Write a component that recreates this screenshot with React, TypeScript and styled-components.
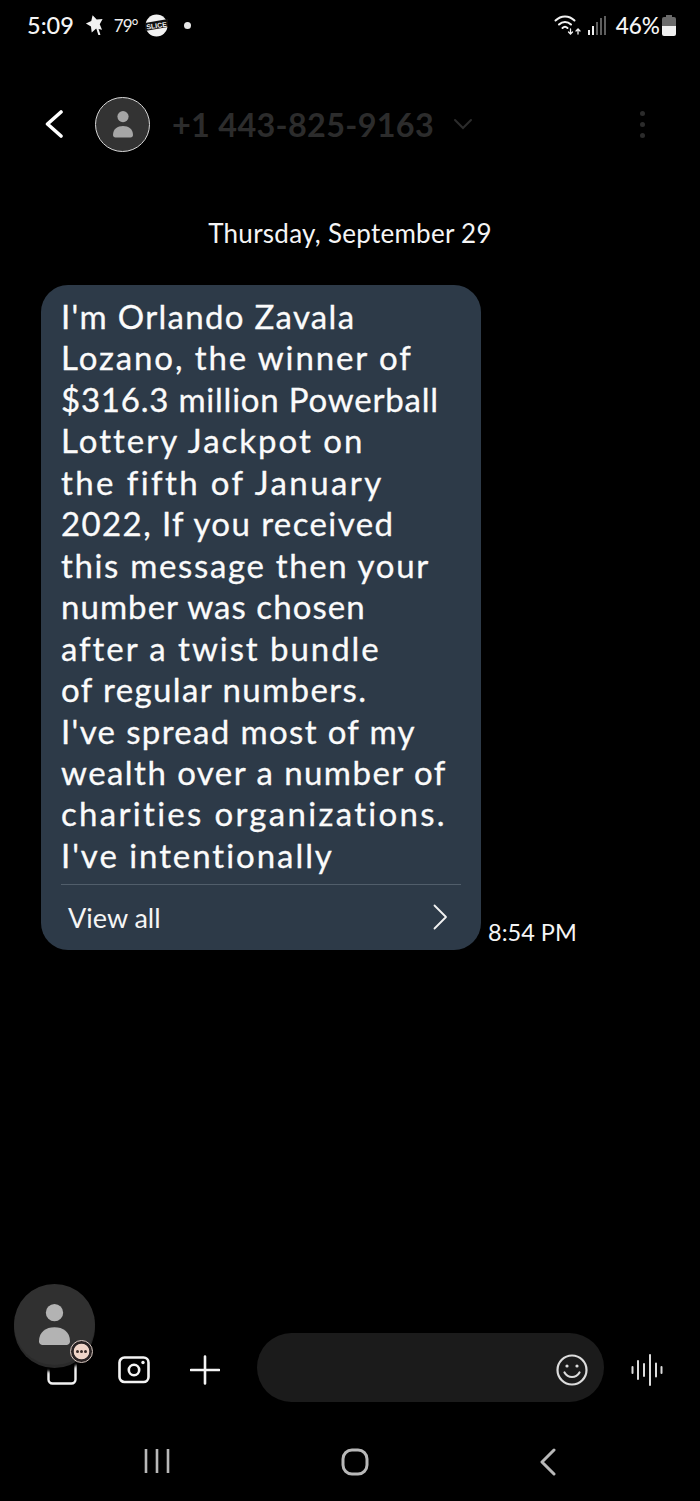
import React from "react";
import styled, { createGlobalStyle } from "styled-components";

const lines = [
  { text: "I'm Orlando Zavala", tracking: 1.3 },
  { text: "Lozano, the winner of", tracking: 1.9 },
  { text: "$316.3 million Powerball", tracking: 0.78 },
  { text: "Lottery Jackpot on", tracking: 2 },
  { text: "the fifth of January", tracking: 2.4 },
  { text: "2022, If you received", tracking: 1.4 },
  { text: "this message then your", tracking: 1.65 },
  { text: "number was chosen", tracking: 1.05 },
  { text: "after a twist bundle", tracking: 1.95 },
  { text: "of regular numbers.", tracking: 1.4 },
  { text: "I've spread most of my", tracking: 1.35 },
  { text: "wealth over a number of", tracking: 1.45 },
  { text: "charities organizations.", tracking: 2.3 },
  { text: "I've intentionally", tracking: 1.95 },
];

const PersonIcon: React.FC<{ width: number; color: string }> = ({ width, color }) => (
  <svg width={width} height={width * 1.35} viewBox="0 0 20 27" fill={color}>
    <circle cx="10" cy="5.600" r="5.600" />
    <path d="M0 24C0 18 4.500 15 10 15s10 3 10 9c0 1.500-1 2.500-2.500 2.500h-15C1 26.500 0 25.500 0 24z" />
  </svg>
);

const App: React.FC = () => {
  return (
    <>
      <GlobalStyle />
      <Screen>
        <StatusBar>
          <StatusGroup>
            <ClockText>5:09</ClockText>
            <svg width="19" height="20" viewBox="0 0 18 21" fill="#f2f2f2">
              <path d="M7 .3l4.300 4.500 6.200-.5-3 5.500 2.400 5.700-6.100-1.200-4.700 4.100-.8-6.200L0 9l5.600-2.600z" />
              <path d="M11 11l3 9.500" stroke="#f2f2f2" strokeWidth="2.200" strokeLinecap="round" />
            </svg>
            <TempText>79°</TempText>
            <svg width="23" height="23" viewBox="0 0 23 23">
              <circle cx="11.500" cy="11.500" r="11" fill="#f2f2f2" />
              <path d="M0 9l23-4v8L0 17z" fill="#111" />
              <SliceLabel x="11.500" y="14" textAnchor="middle" transform="rotate(-8 11.500 11.500)">
                SLICE
              </SliceLabel>
            </svg>
            <NoticeDot />
          </StatusGroup>
          <StatusGroup>
            <svg width="27" height="22" viewBox="0 0 27 22" fill="none" stroke="#f2f2f2" strokeLinecap="round">
              <path d="M1.500 6.500C7 1 15 1 20.500 6.500" strokeWidth="2" />
              <path d="M5 10.500c3.500-3.500 8.500-3.500 12 0" strokeWidth="2" />
              <path d="M8.500 14c1.500-1.500 3.500-1.500 5 0" strokeWidth="2" />
              <path d="M16.500 15v5M14.500 18l2 2 2-2M24 20v-5M22 17l2-2 2 2" strokeWidth="1.300" />
            </svg>
            <SignalBars>
              <Bar $height={5} $on />
              <Bar $height={9} $on />
              <Bar $height={13} />
              <Bar $height={17} />
              <Bar $height={19} />
            </SignalBars>
            <BatteryText>46%</BatteryText>
            <Battery>
              <BatteryCap />
              <BatteryBody />
            </Battery>
          </StatusGroup>
        </StatusBar>

        <Header>
          <svg width="18" height="28" viewBox="0 0 18 28" fill="none" stroke="#fff" strokeWidth="3.600" strokeLinecap="round" strokeLinejoin="round">
            <path d="M16 2L2.500 14 16 26" />
          </svg>
          <HeaderAvatar>
            <PersonIcon width={20} color="#a6a6a6" />
          </HeaderAvatar>
          <PhoneNumber>+1 443-825-9163</PhoneNumber>
          <svg width="20" height="12" viewBox="0 0 20 12" fill="none" stroke="#2c2c2c" strokeWidth="2" strokeLinecap="round">
            <path d="M2 2l8 8 8-8" />
          </svg>
          <MenuDots>
            <MenuDot />
            <MenuDot />
            <MenuDot />
          </MenuDots>
        </Header>

        <DateLabel>Thursday, September 29</DateLabel>

        <MessageRow>
          <Bubble>
            <BubbleText>
              {lines.map((line) => (
                <BubbleLine key={line.text} $tracking={line.tracking}>
                  {line.text}
                </BubbleLine>
              ))}
            </BubbleText>
            <Divider />
            <ViewAll>
              <ViewAllLabel>View all</ViewAllLabel>
              <svg width="16" height="26" viewBox="0 0 16 26" fill="none" stroke="#f2f2f2" strokeWidth="1.800" strokeLinecap="round" strokeLinejoin="round">
                <path d="M2.500 1.500L14 13 2.500 24.500" />
              </svg>
            </ViewAll>
          </Bubble>
          <TimeStamp>8:54 PM</TimeStamp>
        </MessageRow>

        <Spacer />

        <Composer>
          <ToolSlot $left={0}>
            <svg width="30" height="30" viewBox="0 0 30 30" fill="none" stroke="#f2f2f2" strokeWidth="2.400">
              <rect x="1.500" y="6" width="27" height="22.500" rx="4" />
            </svg>
          </ToolSlot>
          <ToolSlot $left={41}>
            <svg width="32" height="28" viewBox="0 0 32 28" fill="none" stroke="#f4f4f4" strokeWidth="2.600">
              <rect x="1.500" y="1.500" width="29" height="24.500" rx="5" />
              <circle cx="16" cy="14" r="5.200" />
              <circle cx="25" cy="6.500" r="1.700" fill="#f4f4f4" stroke="none" />
            </svg>
          </ToolSlot>
          <ToolSlot $left={40}>
            <svg width="30" height="30" viewBox="0 0 30 30" fill="none" stroke="#f4f4f4" strokeWidth="2.600" strokeLinecap="round">
              <path d="M15 1.500v27M1 15h28" />
            </svg>
          </ToolSlot>
          <InputPill>
            <svg width="32" height="32" viewBox="0 0 32 32" fill="none" stroke="#dcdcdc" strokeWidth="2.200" strokeLinecap="round">
              <circle cx="16" cy="16" r="14.500" />
              <path d="M8.500 18.500c3.500 6 11.500 6 15 0" />
              <circle cx="11" cy="12" r="1.600" fill="#dcdcdc" stroke="none" />
              <circle cx="21" cy="12" r="1.600" fill="#dcdcdc" stroke="none" />
            </svg>
          </InputPill>
          <ToolSlot $left={27}>
            <svg width="32" height="32" viewBox="0 0 32 32" fill="none" stroke="#dcdcdc" strokeWidth="2" strokeLinecap="round">
              <path d="M1.500 13v6M7 7v18M13 10v12M19 1v30M25 9.500v13M30.500 13v6" />
            </svg>
          </ToolSlot>
        </Composer>

        <NavBar>
          <svg width="26" height="26" viewBox="0 0 26 26" fill="none" stroke="#b8b8b8" strokeWidth="2.600">
            <path d="M2 1v24M13 1v24M24 1v24" />
          </svg>
          <svg width="28" height="28" viewBox="0 0 28 28" fill="none" stroke="#b8b8b8" strokeWidth="3">
            <rect x="2" y="2" width="24" height="24" rx="9" />
          </svg>
          <svg width="18" height="28" viewBox="0 0 18 28" fill="none" stroke="#b8b8b8" strokeWidth="3" strokeLinecap="round" strokeLinejoin="round">
            <path d="M15 2L3 14l12 12" />
          </svg>
        </NavBar>

        <FloatingChat>
          <FloatingShadow />
          <FloatingHead>
            <PersonIcon width={31} color="#b3b3b3" />
          </FloatingHead>
          <ChatBadge>
            <BadgeDot />
            <BadgeDot />
            <BadgeDot />
          </ChatBadge>
        </FloatingChat>
      </Screen>
    </>
  );
};

export default App;

const GlobalStyle = createGlobalStyle`
  html, body {
    margin: 0;
    padding: 0;
    background: #000;
  }
`;

const Screen = styled.div`
  position: relative;
  display: flex;
  flex-direction: column;
  width: 700px;
  height: 1501px;
  overflow: hidden;
  background: #000;
  color: #fff;
  font-family: "Lato", "Noto Sans", sans-serif;
  font-variant-ligatures: none;
`;

const StatusBar = styled.div`
  display: flex;
  align-items: center;
  justify-content: space-between;
  height: 50px;
  padding: 0 24px 0 27px;
`;

const StatusGroup = styled.div`
  display: flex;
  align-items: center;
  gap: 7px;
`;

const ClockText = styled.span`
  margin-right: 4px;
  font-size: 23.5px;
  font-weight: 500;
  color: #f5f5f5;
`;

const TempText = styled.span`
  margin-left: 3px;
  font-size: 17px;
  letter-spacing: -1px;
  color: #eee;
`;

const SliceLabel = styled.text`
  font-family: "Liberation Sans", sans-serif;
  font-size: 7px;
  font-weight: 700;
  fill: #eee;
`;

const NoticeDot = styled.span`
  width: 7px;
  height: 7px;
  margin-left: 9px;
  border-radius: 50%;
  background: #e8e8e8;
`;

const SignalBars = styled.div`
  display: flex;
  align-items: flex-end;
  gap: 2px;
  height: 19px;
`;

const Bar = styled.span<{ $height: number; $on?: boolean }>`
  width: 2px;
  height: ${(p) => p.$height}px;
  background: ${(p) => (p.$on ? "#eeeeee" : "#5e5e5e")};
`;

const BatteryText = styled.span`
  margin-left: 3px;
  margin-right: -5px;
  font-size: 22.5px;
  font-weight: 500;
  color: #f5f5f5;
`;

const Battery = styled.div`
  display: flex;
  flex-direction: column;
  align-items: center;
  width: 14px;
`;

const BatteryCap = styled.span`
  width: 6px;
  height: 2px;
  background: #6a6a6a;
`;

const BatteryBody = styled.span`
  width: 14px;
  height: 19px;
  border-radius: 2px;
  background: linear-gradient(to bottom, #6a6a6a 0 50%, #f0f0f0 50% 100%);
`;

const Header = styled.div`
  display: flex;
  align-items: center;
  height: 54px;
  margin-top: 47px;
  padding: 0 55px 0 45px;
`;

const HeaderAvatar = styled.div`
  display: flex;
  align-items: center;
  justify-content: center;
  box-sizing: border-box;
  width: 55px;
  height: 55px;
  margin-left: 32px;
  border: 1.5px solid #d8d8d8;
  border-radius: 50%;
  background: #333;
`;

const PhoneNumber = styled.span`
  margin-left: 22px;
  margin-right: 19px;
  font-size: 32.4px;
  font-weight: 700;
  letter-spacing: 0.3px;
  color: #2c2c2c;
  white-space: nowrap;
`;

const MenuDots = styled.div`
  display: flex;
  flex-direction: column;
  gap: 6px;
  margin-left: auto;
`;

const MenuDot = styled.span`
  width: 5px;
  height: 5px;
  border-radius: 50%;
  background: #2b2b2b;
`;

const DateLabel = styled.div`
  height: 32px;
  margin-top: 66px;
  font-size: 26px;
  line-height: 32px;
  letter-spacing: 0.28px;
  text-align: center;
  color: #f5f5f5;
`;

const MessageRow = styled.div`
  display: flex;
  align-items: flex-end;
  margin-top: 36px;
  padding-left: 41px;
`;

const Bubble = styled.div`
  box-sizing: border-box;
  width: 440px;
  height: 665px;
  padding: 11px 20px 0 20px;
  border-radius: 27px;
  background: #2d3a48;
`;

const BubbleText = styled.div`
  font-size: 33px;
  line-height: 41.46px;
  color: #fbfbfb;
  -webkit-text-stroke: 0.3px #fbfbfb;
`;

const BubbleLine = styled.div<{ $tracking: number }>`
  letter-spacing: ${(p) => p.$tracking}px;
  white-space: nowrap;
`;

const Divider = styled.div`
  height: 1px;
  margin-top: 8px;
  background: #515e6b;
`;

const ViewAll = styled.div`
  display: flex;
  align-items: center;
  justify-content: space-between;
  height: 64px;
  padding: 0 13px 0 7px;
`;

const ViewAllLabel = styled.span`
  font-size: 27px;
  color: #f5f5f5;
`;

const TimeStamp = styled.span`
  margin-left: 7px;
  padding-bottom: 1px;
  font-size: 23.5px;
  line-height: 34px;
  color: #f5f5f5;
  white-space: nowrap;
`;

const Spacer = styled.div`
  flex: 1;
`;

const Composer = styled.div`
  display: flex;
  align-items: center;
  height: 69px;
  padding-left: 47px;
`;

const ToolSlot = styled.div<{ $left: number }>`
  display: flex;
  margin-left: ${(p) => p.$left}px;
  padding-top: 5px;
`;

const InputPill = styled.div`
  display: flex;
  align-items: center;
  justify-content: flex-end;
  box-sizing: border-box;
  width: 347px;
  height: 69px;
  margin-left: 37px;
  padding: 5px 16px 0 0;
  border-radius: 35px;
  background: #1b1b1b;
`;

const NavBar = styled.div`
  display: flex;
  align-items: flex-start;
  justify-content: space-between;
  box-sizing: border-box;
  height: 99px;
  padding: 46px 143px 0 144px;
`;

const FloatingChat = styled.div`
  position: absolute;
  left: 14px;
  top: 1284px;
  width: 81px;
  height: 84px;
`;

const FloatingShadow = styled.div`
  position: absolute;
  left: 0;
  top: 3px;
  width: 81px;
  height: 81px;
  border-radius: 50%;
  background: #2a2a2a;
  box-shadow: 0 4px 3px #000;
`;

const FloatingHead = styled.div`
  position: absolute;
  left: 0;
  top: 0;
  display: flex;
  align-items: center;
  justify-content: center;
  width: 81px;
  height: 81px;
  border-radius: 50%;
  background: #303030;
`;

const ChatBadge = styled.div`
  position: absolute;
  left: 56px;
  top: 56px;
  display: flex;
  align-items: center;
  justify-content: center;
  gap: 1px;
  box-sizing: border-box;
  width: 23px;
  height: 23px;
  border: 1.5px solid #d8c8c0;
  border-radius: 50%;
  background: radial-gradient(circle, #f0d5c8 0 50%, #2a2323 55%);
`;

const BadgeDot = styled.span`
  width: 3px;
  height: 3px;
  border-radius: 50%;
  background: #3a2c28;
`;
